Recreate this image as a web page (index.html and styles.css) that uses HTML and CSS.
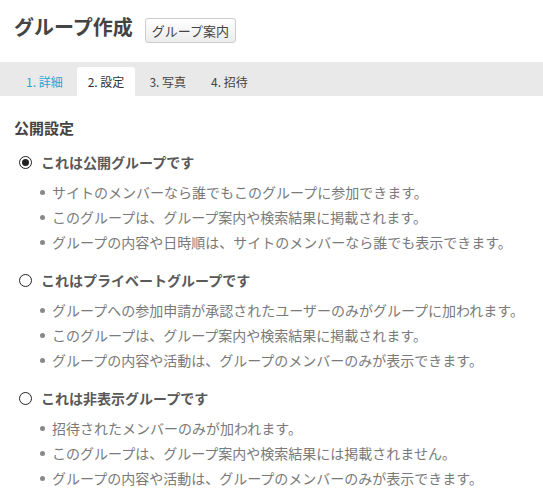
FILE: index.html
```html
<!DOCTYPE html>
<html lang="ja">
<head>
	<meta charset="utf-8">
	<title>グループ作成</title>
	<link rel="stylesheet" href="styles.css">
</head>
<body>
	<div class="header">
		<h1>グループ作成</h1>
		<button class="guide-btn" type="button">グループ案内</button>
	</div>

	<div class="tabs">
		<a class="tab tab-link" href="#">1. 詳細</a>
		<span class="tab tab-active">2. 設定</span>
		<span class="tab">3. 写真</span>
		<span class="tab">4. 招待</span>
	</div>

	<div class="content">
		<h2>公開設定</h2>

		<div class="option">
			<div class="option-title"><span class="radio radio-on"></span>これは公開グループです</div>
			<ul>
				<li>サイトのメンバーなら誰でもこのグループに参加できます。</li>
				<li>このグループは、グループ案内や検索結果に掲載されます。</li>
				<li>グループの内容や日時順は、サイトのメンバーなら誰でも表示できます。</li>
			</ul>
		</div>

		<div class="option">
			<div class="option-title"><span class="radio"></span>これはプライベートグループです</div>
			<ul>
				<li>グループへの参加申請が承認されたユーザーのみがグループに加われます。</li>
				<li>このグループは、グループ案内や検索結果に掲載されます。</li>
				<li>グループの内容や活動は、グループのメンバーのみが表示できます。</li>
			</ul>
		</div>

		<div class="option">
			<div class="option-title"><span class="radio"></span>これは非表示グループです</div>
			<ul>
				<li>招待されたメンバーのみが加われます。</li>
				<li>このグループは、グループ案内や検索結果には掲載されません。</li>
				<li>グループの内容や活動は、グループのメンバーのみが表示できます。</li>
			</ul>
		</div>
	</div>
</body>
</html>
```

FILE: styles.css
```css
body {
	margin: 0;
	font-family: "Noto Sans CJK JP", "Noto Sans", sans-serif;
	color: #555;
	background-color: white;
}
.header {
	display: flex;
	align-items: center;
	padding: 10px 14px 0;
	height: 34px;
}
h1 {
	margin: 0 12px 0 0;
	font-size: 20px;
	font-weight: bold;
	color: #444;
	line-height: 28px;
}
.guide-btn {
	margin-top: 6px;
	font-family: inherit;
	font-size: 13px;
	color: #444;
	line-height: 23px;
	padding: 0 6px;
	border: 1px solid #ccc;
	border-radius: 3px;
	background: linear-gradient(#fff, #ececec);
}
.tabs {
	display: flex;
	gap: 3px;
	margin-top: 18px;
	padding: 5px 0 0 15px;
	height: 29px;
	background-color: #e9e9e9;
}
.tab {
	padding: 0 11px;
	font-size: 12px;
	line-height: 29px;
	color: #444;
	text-decoration: none;
	border-radius: 3px 3px 0 0;
}
.tab-link {
	color: #2ba4d4;
}
.tab-active {
	background-color: white;
	color: #333;
}
.content {
	padding: 0 14px;
}
h2 {
	margin: 20px 0 10px;
	font-size: 15px;
	line-height: 24px;
	color: #444;
}
.option {
	margin-bottom: 13px;
}
.option-title {
	display: flex;
	align-items: center;
	padding-left: 5px;
	font-size: 14px;
	font-weight: bold;
	line-height: 24px;
	color: #595959;
}
.radio {
	position: relative;
	width: 11px;
	height: 11px;
	margin-right: 9px;
	border: 1px solid #222;
	border-radius: 50%;
	background-color: white;
}
.radio-on::after {
	content: "";
	position: absolute;
	left: 2px;
	top: 2px;
	width: 7px;
	height: 7px;
	border-radius: 50%;
	background-color: #222;
}
ul {
	list-style: none;
	margin: 6px 0 0;
	padding: 0 0 0 26px;
}
li {
	position: relative;
	padding-left: 12px;
	font-size: 14px;
	line-height: 25px;
	color: #7a7a7a;
	white-space: nowrap;
}
li::before {
	content: "";
	position: absolute;
	left: 0;
	top: 10px;
	width: 5px;
	height: 5px;
	border-radius: 50%;
	background-color: #888;
}
```
